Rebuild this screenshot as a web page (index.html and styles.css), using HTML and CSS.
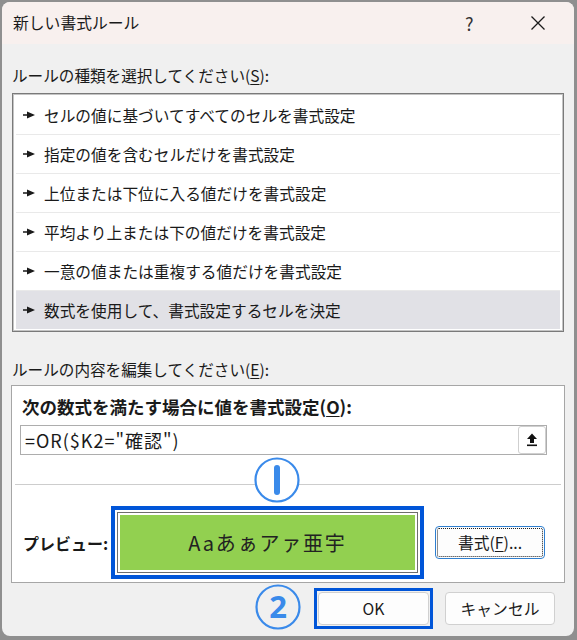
FILE: index.html
```
<!DOCTYPE html>
<html lang="ja">
<head>
<meta charset="utf-8">
<title>新しい書式ルール</title>
<link rel="stylesheet" href="styles.css">
</head>
<body>
<div class="dialog">
  <div class="titlebar">
    <span class="title">新しい書式ルール</span>
    <span class="help">?</span>
    <span class="close">
      <svg width="16" height="16" viewBox="0 0 16 16"><path d="M1.5 1.5 L14.5 14.5 M14.5 1.5 L1.5 14.5" stroke="#1a1a1a" stroke-width="1.3" fill="none"/></svg>
    </span>
  </div>
  <div class="content">
    <div class="label label-types">ルールの種類を選択してください(<u>S</u>):</div>
    <ul class="rules">
      <li class="rule"><svg class="arrow" width="12" height="8" viewBox="0 0 12 8"><path d="M0 3.2 H4 V0.5 L12 4 L4 7.5 V4.8 H0 Z" fill="#1a1a1a"/></svg><span>セルの値に基づいてすべてのセルを書式設定</span></li>
      <li class="rule"><svg class="arrow" width="12" height="8" viewBox="0 0 12 8"><path d="M0 3.2 H4 V0.5 L12 4 L4 7.5 V4.8 H0 Z" fill="#1a1a1a"/></svg><span>指定の値を含むセルだけを書式設定</span></li>
      <li class="rule"><svg class="arrow" width="12" height="8" viewBox="0 0 12 8"><path d="M0 3.2 H4 V0.5 L12 4 L4 7.5 V4.8 H0 Z" fill="#1a1a1a"/></svg><span>上位または下位に入る値だけを書式設定</span></li>
      <li class="rule"><svg class="arrow" width="12" height="8" viewBox="0 0 12 8"><path d="M0 3.2 H4 V0.5 L12 4 L4 7.5 V4.8 H0 Z" fill="#1a1a1a"/></svg><span>平均より上または下の値だけを書式設定</span></li>
      <li class="rule"><svg class="arrow" width="12" height="8" viewBox="0 0 12 8"><path d="M0 3.2 H4 V0.5 L12 4 L4 7.5 V4.8 H0 Z" fill="#1a1a1a"/></svg><span>一意の値または重複する値だけを書式設定</span></li>
      <li class="rule selected"><svg class="arrow" width="12" height="8" viewBox="0 0 12 8"><path d="M0 3.2 H4 V0.5 L12 4 L4 7.5 V4.8 H0 Z" fill="#1a1a1a"/></svg><span>数式を使用して、書式設定するセルを決定</span></li>
    </ul>
    <div class="label label-edit">ルールの内容を編集してください(<u>E</u>):</div>
    <div class="panel">
      <div class="bold-label">次の数式を満たす場合に値を書式設定(<u>O</u>):</div>
      <div class="formula">
        <span class="formula-text">=OR($K2="確認")</span>
        <span class="ref-btn">
          <svg width="12" height="14" viewBox="0 0 12 14"><path d="M6 0.5 L11 6 H8 V10 H4 V6 H1 Z" fill="#111"/><rect x="1" y="11.5" width="10" height="1.6" fill="#111"/></svg>
        </span>
      </div>
      <div class="sep"></div>
      <div class="preview-row">
        <span class="preview-label">プレビュー:</span>
        <div class="highlight preview-frame">
          <div class="preview-box">
            <div class="preview">Aaあぁアァ亜宇</div>
          </div>
        </div>
        <span class="btn fmt-btn">書式(<u>F</u>)...</span>
      </div>
      <svg class="mark mark-one" width="48" height="48" viewBox="0 0 48 48"><circle cx="24" cy="24" r="21.5" fill="#fff" stroke="#3a8aea" stroke-width="2.2"/><line x1="24" y1="12" x2="24" y2="36" stroke="#3a8aea" stroke-width="6" stroke-linecap="round"/></svg>
    </div>
    <div class="buttons">
      <svg class="mark mark-two" width="48" height="48" viewBox="0 0 48 48"><circle cx="24" cy="24" r="21.5" fill="none" stroke="#3a8aea" stroke-width="2.2"/><text x="24" y="35" text-anchor="middle" class="mark-num">2</text></svg>
      <div class="highlight ok-frame"><span class="btn ok-btn">OK</span></div>
      <span class="btn cancel-btn">キャンセル</span>
    </div>
  </div>
</div>
</body>
</html>
```
FILE: styles.css
```
* { box-sizing: border-box; }
html, body { margin: 0; padding: 0; }
body {
  width: 577px;
  height: 640px;
  background: #8f8f8f;
  padding: 2px 3px 4px 2px;
  font-family: "Noto Sans CJK JP", "Noto Sans", sans-serif;
  color: #1a1a1a;
  overflow: hidden;
}
u { text-decoration: underline; text-underline-offset: 2px; text-decoration-thickness: 1px; }
.dialog {
  width: 572px;
  height: 634px;
  background: #f0f0f0;
  border-radius: 8px;
  overflow: hidden;
  display: flex;
  flex-direction: column;
}
.titlebar {
  height: 42px;
  background: #f8f0ee;
  display: flex;
  align-items: center;
  padding-left: 11px;
  flex-shrink: 0;
}
.title { font-size: 15.8px; flex: 1; line-height: 20px; }
.help { font-size: 18px; color: #333; width: 20px; margin-right: 45px; line-height: 20px; }
.close { width: 16px; height: 16px; margin-right: 28px; display: flex; }
.content { padding: 0 10px; display: flex; flex-direction: column; position: relative; }
.label { font-size: 15.6px; line-height: 20px; }
.label-types { margin-top: 21px; }
.rules {
  list-style: none;
  margin: 8px 0 0 0;
  padding: 2px 3px;
  width: 552px;
  height: 239px;
  background: #fff;
  border: 1px solid #7a7a7a;
  box-shadow: inset 0 0 0 1px #c4c4c4;
}
.rule {
  height: 39px;
  display: flex;
  align-items: center;
  border-bottom: 1px solid #e9e9e9;
  padding-left: 7px;
  font-size: 15.7px;
}
.rule .arrow { margin-right: 9px; flex-shrink: 0; }
.rule.selected { background: #e1e1e6; border-bottom: none; height: 38px; }
.label-edit { margin-top: 27px; }
.panel {
  position: relative;
  margin: 6px -1px 0 -1px;
  height: 198px;
  background: #fff;
  border: 1px solid #a6a6a6;
  padding: 11px 0 0 0;
}
.bold-label { font-weight: bold; font-size: 17.5px; line-height: 20px; padding-left: 10px; }
.formula {
  margin: 8px 0 0 8px;
  width: 527px;
  height: 30px;
  border: 1px solid #adadad;
  display: flex;
  align-items: center;
  justify-content: space-between;
  padding: 0 0 0 4px;
}
.formula-text { font-size: 18px; letter-spacing: 1px; }
.ref-btn {
  width: 28px;
  height: 28px;
  border: 1px solid #cfcfcf;
  border-radius: 3px;
  display: flex;
  align-items: center;
  justify-content: center;
  background: #fff;
}
.sep { height: 1px; background: #cdcdcd; margin: 29px 3px 0 3px; }
.preview-row { display: flex; align-items: center; margin-top: 21px; padding-left: 11px; }
.preview-label { font-weight: bold; font-size: 16px; width: 88px; }
.highlight { border: 4px solid #0055d8; background: #fff; }
.preview-frame { width: 313px; height: 73px; padding: 2px; }
.preview-box { border: 1px solid #6e6e6e; height: 100%; padding: 2px; }
.preview {
  height: 100%;
  background: #92d050;
  display: flex;
  align-items: center;
  justify-content: center;
  font-size: 20px;
  letter-spacing: 1.8px;
  color: #222;
}
.btn {
  display: flex;
  align-items: center;
  justify-content: center;
  width: 110px;
  height: 33px;
  background: #fdfdfd;
  border: 1px solid #d0d0d0;
  border-radius: 4px;
  font-size: 15.8px;
}
.fmt-btn {
  margin-left: 11px;
  border: 1px solid #2f7fd0;
  outline: 1px dotted #222;
  outline-offset: -3px;
}
.mark-one { position: absolute; left: 241px; top: 70px; }
.buttons { display: flex; align-items: center; justify-content: flex-end; margin-top: 2px; padding-right: 9px; }
.mark-two { margin-right: 12px; margin-top: -2px; }
.mark-num { font-family: "Noto Sans", sans-serif; font-weight: bold; font-size: 31px; fill: #3a8aea; }
.ok-frame { border-width: 3px; padding: 1px; background: #f0f0f0; }
.ok-btn { width: 111px; }
.cancel-btn { margin-left: 12px; }
```
